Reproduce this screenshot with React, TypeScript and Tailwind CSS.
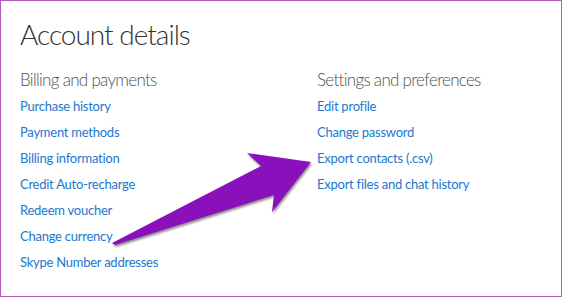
const billing = [
  "Purchase history",
  "Payment methods",
  "Billing information",
  "Credit Auto-recharge",
  "Redeem voucher",
  "Change currency",
  "Skype Number addresses",
];

const settings = [
  "Edit profile",
  "Change password",
  "Export contacts (.csv)",
  "Export files and chat history",
];

function LinkList({ title, items }: { title: string; items: string[] }) {
  return (
    <div className="flex flex-col">
      <h2 className="text-[17px] font-light leading-[26px] tracking-[-0.7px] text-[#505050]">{title}</h2>
      <ul className="flex flex-col">
        {items.map((item) => (
          <li key={item} className="h-[26px] text-[13px] leading-[26px] tracking-[-0.25px] text-[#1a78cf]">
            <a href="#">{item}</a>
          </li>
        ))}
      </ul>
    </div>
  );
}

export default function App() {
  return (
    <div
      className="relative h-[297px] w-[562px] overflow-hidden border border-[#b05cb8] bg-white pl-[19px] pt-[11px]"
      style={{ fontFamily: 'Lato, "Open Sans", "Liberation Sans", sans-serif' }}
    >
      <h1 className="text-[28px] font-light leading-[44px] tracking-[-1px] text-[#333]">Account details</h1>
      <div className="mt-[11px] grid grid-cols-[297px_1fr]">
        <LinkList title="Billing and payments" items={billing} />
        <LinkList title="Settings and preferences" items={settings} />
      </div>

      <svg
        className="pointer-events-none absolute left-[-1px] top-[-1px]"
        width="562"
        height="297"
        viewBox="0 0 562 297"
        style={{ filter: "drop-shadow(1px 2px 1px rgba(0,0,0,0.45))" }}
      >
        <polygon
          points="112,243 115,245 274,195 272,212 311,162 247,153 261,166"
          fill="#8a10bb"
        />
      </svg>
    </div>
  );
}
